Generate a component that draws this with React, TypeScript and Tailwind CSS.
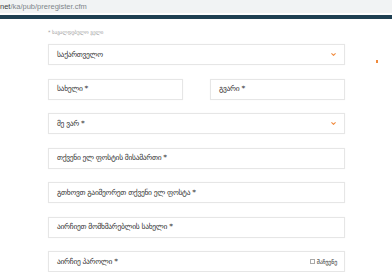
import { ChevronDown } from 'lucide-react';

const font = { fontFamily: '"DejaVu Sans", "Noto Sans", sans-serif' };

function Field({ label, chevron, extra }: { label: string; chevron?: boolean; extra?: React.ReactNode }) {
  return (
    <div className="flex h-[21px] items-center justify-between border border-[#e6e6e6] bg-white pl-[8px] pr-[7px] shadow-[0_0_1px_rgba(0,0,0,0.05)]">
      <span className="text-[7.5px] tracking-[-0.3px] text-[#333]">{label}</span>
      {chevron && <ChevronDown size={7} strokeWidth={3.5} className="text-[#f08a3c]" />}
      {extra}
    </div>
  );
}

export default function App() {
  return (
    <div className="relative h-[272px] w-[392px] overflow-hidden bg-white" style={font}>
      {/* browser address bar */}
      <div className="flex h-[13px] items-center bg-[#f1f3f4] text-[7.5px] leading-none" style={{ fontFamily: '"Liberation Sans", sans-serif' }}>
        <span className="text-[#3c4043]">net</span>
        <span className="text-[#80868b]">/ka/pub/preregister.cfm</span>
      </div>
      <div className="mt-[2px] h-[4px] bg-[#1f4052]" />

      <div className="ml-[48px] w-[297px]">
        <div className="mt-[11px] text-[5px] leading-none text-[#999]">* სავალდებულო ველი</div>

        <div className="mt-[9px] flex flex-col gap-[13.5px]">
          <Field label="საქართველო" chevron />
          <div className="grid grid-cols-2 gap-[27px]">
            <Field label="სახელი *" />
            <Field label="გვარი *" />
          </div>
          <Field label="მე ვარ *" chevron />
          <Field label="თქვენი ელ ფოსტის მისამართი *" />
          <Field label="გთხოვთ გაიმეორეთ თქვენი ელ ფოსტა *" />
          <Field label="აირჩიეთ მომხმარებლის სახელი *" />
          <Field
            label="აირჩიე პაროლი *"
            extra={
              <label className="flex items-center gap-[2px] text-[6px] tracking-[-0.2px] text-[#333]">
                <span className="inline-block h-[5px] w-[5px] border border-[#aaa] bg-white" />
                მაჩვენე
              </label>
            }
          />
        </div>
      </div>

      <div className="absolute left-[376px] top-[60px] h-[3px] w-[2px] bg-[#f08a3c]" />
    </div>
  );
}
